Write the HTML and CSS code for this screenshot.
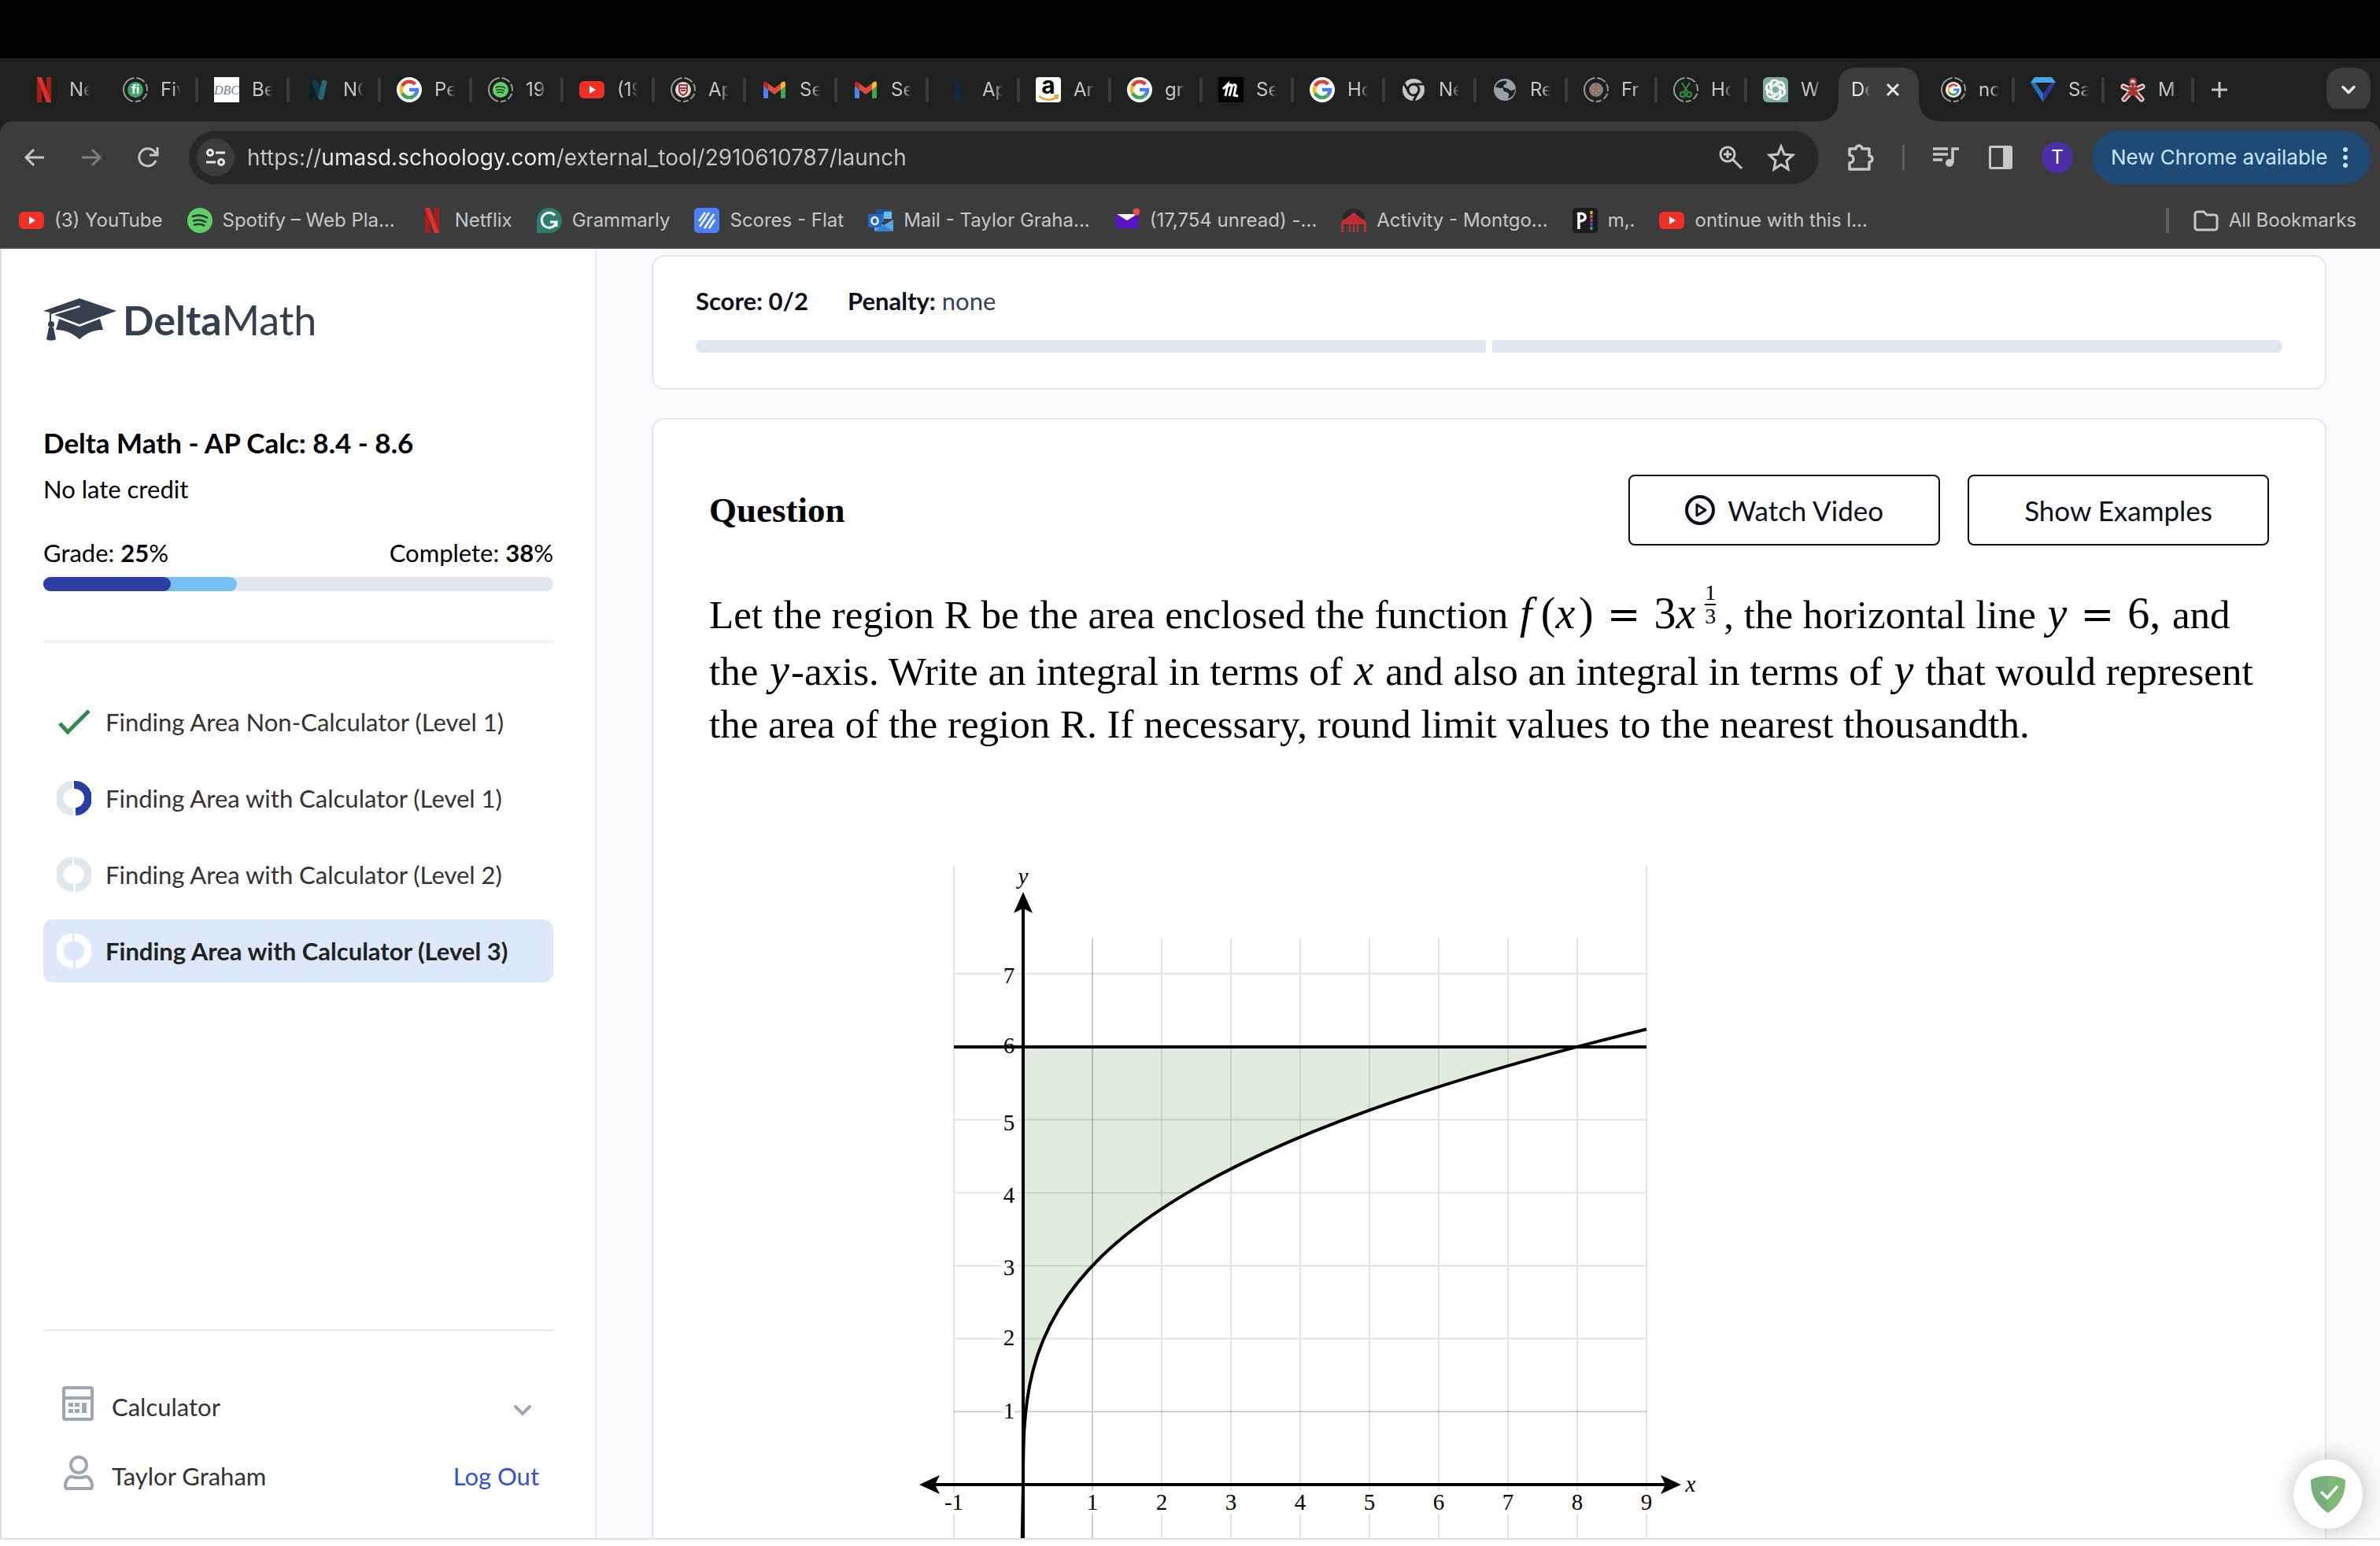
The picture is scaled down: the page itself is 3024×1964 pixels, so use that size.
FILE: index.html
```html
<!DOCTYPE html>
<html lang="en">
<head>
  <meta charset="UTF-8">
  <title>DeltaMath</title>
  <link rel="stylesheet" href="styles.css">
</head>
<body>

  <!-- shared icons -->
  <svg class="defs" aria-hidden="true">
    <symbol id="netflix" viewBox="0 0 32 32">
      <path fill="#a81c1c" d="M7 0h6v32H7zM19 0h6v32h-6z"/>
      <path fill="#e0302a" d="M7 0h6l12 32h-6z"/>
    </symbol>
    <symbol id="ring" viewBox="0 0 32 32">
      <circle cx="16" cy="16" r="15" fill="none" stroke="#9a9a9a" stroke-width="2"/>
      <path d="M16 16L16-2M16 16L32 5M16 16L34 20M16 16L26 32M16 16L14 34" stroke="#1f2020" stroke-width="3"/>
      <circle cx="16" cy="16" r="13" fill="#1f2020"/>
    </symbol>
    <symbol id="youtube" viewBox="0 0 32 32">
      <rect y="5" width="32" height="22" rx="6" fill="#ee3124"/>
      <path fill="#fff" d="M13 11l8 5-8 5z"/>
    </symbol>
    <symbol id="spotify" viewBox="0 0 32 32">
      <circle cx="16" cy="16" r="16" fill="#5fd068"/>
      <path d="M7 11c6-2 13-1.500 18 1.500M8 16.500c5-1.500 11-1 15 1.500M9 21.500c4-1 9-1 12 1" fill="none" stroke="#2b3a2c" stroke-width="2.600" stroke-linecap="round"/>
    </symbol>
    <symbol id="google" viewBox="0 0 32 32">
      <circle cx="16" cy="16" r="16" fill="#fff"/>
      <g fill="none" stroke-width="4.500">
        <path stroke="#dc4437" d="M23.500 9A10 10 0 0 0 7 11.500"/>
        <path stroke="#f4b92c" d="M7 11.500A10 10 0 0 0 7 20.500"/>
        <path stroke="#3ea457" d="M7 20.500A10 10 0 0 0 22.500 23.500"/>
        <path stroke="#4a7ff0" d="M22.500 23.500A10 10 0 0 0 26 16H16"/>
      </g>
    </symbol>
    <symbol id="gmail" viewBox="0 0 32 32">
      <path fill="#4a85ee" d="M2 8h6v19H4a2 2 0 0 1-2-2z"/>
      <path fill="#3fa653" d="M24 8h6v17a2 2 0 0 1-2 2h-4z"/>
      <path fill="#f4bc30" d="M24 8l2-2c2-1.500 4 0 4 2v3l-6 5z"/>
      <path fill="#b8281f" d="M8 8L6 6C4 4.500 2 6 2 8v3l6 5z"/>
      <path fill="#e04a3c" d="M8 8l8 6 8-6v8l-8 6-8-6z"/>
    </symbol>
    <symbol id="chev" viewBox="0 0 32 32">
      <path d="M8 12l8 8 8-8" fill="none" stroke="currentColor" stroke-width="4" stroke-linecap="round" stroke-linejoin="round"/>
    </symbol>
  </svg>

  <div class="notch"></div>

  <div class="tabstrip">
    <button class="tab first"><svg class="fav"><use href="#netflix"/></svg><span>Ne</span></button>
    <button class="tab"><svg class="fav" viewBox="0 0 32 32"><use href="#ring"/><circle cx="16" cy="16" r="10" fill="#40a566"/><text x="16" y="21" text-anchor="middle" class="ico-bold" fill="#fff">fi</text></svg><span>Fiv</span></button>
    <button class="tab"><svg class="fav" viewBox="0 0 32 32"><rect width="32" height="32" fill="#fff"/><text x="16" y="22" text-anchor="middle" class="ico-script" fill="#6d8296">DBC</text></svg><span>Be</span></button>
    <button class="tab"><svg class="fav" viewBox="0 0 32 32"><path d="M7 26l5-19" stroke="#0a2026" stroke-width="7" stroke-linecap="round"/><path d="M12 7l8 19" stroke="#123f47" stroke-width="7" stroke-linecap="round"/><path d="M20 25l4-18" stroke="#246872" stroke-width="7" stroke-linecap="round"/></svg><span>NO</span></button>
    <button class="tab"><svg class="fav"><use href="#google"/></svg><span>Pe</span></button>
    <button class="tab"><svg class="fav" viewBox="0 0 32 32"><use href="#ring"/><use href="#spotify" x="6" y="6" width="20" height="20"/></svg><span>19</span></button>
    <button class="tab"><svg class="fav"><use href="#youtube"/></svg><span>(19</span></button>
    <button class="tab"><svg class="fav" viewBox="0 0 32 32"><use href="#ring"/><circle cx="16" cy="16" r="10" fill="#ddd"/><path d="M11 10h10v7c0 3-3 5-5 6-2-1-5-3-5-6zM11 14h10M13 17h6" fill="none" stroke="#a33" stroke-width="2"/></svg><span>Ap</span></button>
    <button class="tab"><svg class="fav"><use href="#gmail"/></svg><span>Se</span></button>
    <button class="tab"><svg class="fav"><use href="#gmail"/></svg><span>Se</span></button>
    <button class="tab"><svg class="fav" viewBox="0 0 32 32"><path fill="#12293f" d="M15 4h3l1 6h2l-1 4v9l4 7H9l4-7v-9l-1-4h2z"/></svg><span>Ap</span></button>
    <button class="tab"><svg class="fav" viewBox="0 0 32 32"><rect width="32" height="32" rx="4" fill="#fff"/><text x="16" y="21" text-anchor="middle" class="ico-amazon">a</text><path d="M4 24c7 6 17 6 23 1M23 24l5-1-1 5" fill="none" stroke="#f29d38" stroke-width="2.500"/></svg><span>Am</span></button>
    <button class="tab"><svg class="fav"><use href="#google"/></svg><span>gr</span></button>
    <button class="tab"><svg class="fav" viewBox="0 0 32 32"><rect width="32" height="32" fill="#000"/><path d="M6 15l6-6-3 15M11 13c4-5 7-4 6 0l-3 11M16 13c4-5 7-4 6 0l-2 10 5 1" fill="none" stroke="#fff" stroke-width="3"/></svg><span>Se</span></button>
    <button class="tab"><svg class="fav"><use href="#google"/></svg><span>Ho</span></button>
    <button class="tab"><svg class="fav" viewBox="0 0 32 32"><circle cx="16" cy="16" r="14" fill="#c7c7c7"/><circle cx="16" cy="16" r="7" fill="none" stroke="#1f2020" stroke-width="3"/><path d="M16 9h13M10 19L4 8M22 19l-6 11" stroke="#1f2020" stroke-width="3"/></svg><span>Ne</span></button>
    <button class="tab"><svg class="fav" viewBox="0 0 32 32"><circle cx="16" cy="16" r="14" fill="#9aa0a6"/><path fill="#1f2020" d="M18 5c1 3-1 4-3 5s0 4 3 4 3 3 6 3 3-1 5-2c0 7-4 11-9 12 1-4 2-5 0-7s-6-1-6-4-2-2-4-2-3-2-6-1c1-5 6-9 14-8z"/><path fill="#9aa0a6" d="M20 6c4 1 7 5 8 9-3 1-5 0-6-2s-4-1-4-3 3-2 2-4z"/></svg><span>Re</span></button>
    <button class="tab narrow"><svg class="fav" viewBox="0 0 32 32"><use href="#ring"/><circle cx="16" cy="16" r="9" fill="#8d6f68"/><circle cx="16" cy="16" r="7" fill="none" stroke="#52a39b" stroke-width="2" stroke-dasharray="3 4"/><circle cx="16" cy="16" r="4" fill="none" stroke="#cf8b4a" stroke-width="2" stroke-dasharray="2 3"/></svg><span>Fr</span></button>
    <button class="tab narrow"><svg class="fav" viewBox="0 0 32 32"><use href="#ring"/><path d="M11 7l8 13M21 7l-8 13" stroke="#2f9242" stroke-width="2"/><circle cx="12" cy="22" r="3" fill="none" stroke="#2f9242" stroke-width="2"/><circle cx="20" cy="22" r="3" fill="none" stroke="#2f9242" stroke-width="2"/></svg><span>Ho</span></button>
    <button class="tab narrow last"><svg class="fav" viewBox="0 0 32 32"><path fill="#80aba0" d="M6 0h20a6 6 0 0 1 6 6v26H6a6 6 0 0 1-6-6V6a6 6 0 0 1 6-6z"/><g fill="none" stroke="#fff" stroke-width="1.800"><path id="petal" d="M11 18V9a5 5 0 0 1 9-3M13 10l7-4a5 5 0 0 1 6 7"/><use href="#petal" transform="rotate(60 16 16)"/><use href="#petal" transform="rotate(120 16 16)"/><use href="#petal" transform="rotate(180 16 16)"/><use href="#petal" transform="rotate(240 16 16)"/><use href="#petal" transform="rotate(300 16 16)"/></g></svg><span>W</span></button>
    <div class="tab current"><span>De</span><button class="close" aria-label="Close tab"><svg viewBox="0 0 18 18"><path d="M2 2l14 14M16 2L2 16" stroke="currentColor" stroke-width="3"/></svg></button></div>
    <button class="tab narrow"><svg class="fav" viewBox="0 0 32 32"><use href="#ring"/><use href="#google" x="6" y="6" width="20" height="20"/></svg><span>no</span></button>
    <button class="tab narrow"><svg class="fav" viewBox="0 0 32 32"><path fill="#4aa5e8" d="M5 0h22l5 7H0z"/><path fill="#2c6fc0" d="M0 7h6l10 14v11z"/><path fill="#2b3a9b" d="M32 7h-6L16 21v11z"/></svg><span>Sa</span></button>
    <button class="tab narrow"><svg class="fav" viewBox="0 0 32 32"><g fill="none" stroke-linecap="round" stroke-linejoin="round"><path stroke="#ddd" stroke-width="7" d="M16 5v8M4 12l9 4M28 12l-9 4M5 28l8-9M27 28l-8-9"/><circle cx="16" cy="6" r="5" fill="#ddd"/><path stroke="#a33232" stroke-width="3" d="M16 8v6M4 12l9 4M28 12l-9 4M5 28l8-9M27 28l-8-9M12 13l8 9M20 13l-8 9M11 19l5 3 5-3"/><circle cx="16" cy="6" r="4" stroke="#a33232" stroke-width="2.500"/></g></svg><span>M</span></button>
    <button class="round-btn plus" aria-label="New tab"><svg viewBox="0 0 22 22"><path d="M11 1v20M1 11h20" stroke="currentColor" stroke-width="3"/></svg></button>
    <button class="round-btn search-tabs" aria-label="Search tabs"><svg viewBox="0 0 32 32"><use href="#chev"/></svg></button>
  </div>

  <div class="toolbar">
    <div class="nav">
      <button aria-label="Back"><svg viewBox="0 0 32 32"><path d="M28 16H6M15 6L5 16l10 10" fill="none" stroke="currentColor" stroke-width="3"/></svg></button>
      <button class="off" aria-label="Forward"><svg viewBox="0 0 32 32"><path d="M4 16h22M17 6l10 10-10 10" fill="none" stroke="currentColor" stroke-width="3"/></svg></button>
      <button aria-label="Reload"><svg viewBox="0 0 32 32"><path d="M26 20A11 11 0 1 1 24 8.500l3 3M28 3v10H18" fill="none" stroke="currentColor" stroke-width="3"/></svg></button>
    </div>
    <div class="omnibox">
      <button class="site" aria-label="Site information"><svg viewBox="0 0 24 24"><g fill="none" stroke="currentColor" stroke-width="3"><circle cx="5" cy="6" r="3.500"/><path d="M12 6h12M0 18h12"/><circle cx="19" cy="18" r="3.500"/></g></svg></button>
      <input type="text" class="url" aria-label="Address" value="https://umasd.schoology.com/external_tool/2910610787/launch">
      <button aria-label="Zoom"><svg viewBox="0 0 36 36"><g fill="none" stroke="currentColor" stroke-width="3"><circle cx="14" cy="14" r="9"/><path d="M21 21l11 11M14 9v10M9 14h10"/></g></svg></button>
      <button aria-label="Bookmark"><svg viewBox="0 0 36 36"><path d="M18 4l4 10 11 1-8 7 2 11-9-6-9 6 2-11-8-7 11-1z" fill="none" stroke="currentColor" stroke-width="3"/></svg></button>
    </div>
    <div class="actions">
      <button aria-label="Extensions"><svg viewBox="0 0 36 36"><path d="M3 7h8a4 4 0 0 1 8 0h9v9a4 4 0 0 1 0 8v9H3v-8a5 5 0 0 0 0-10z" fill="none" stroke="currentColor" stroke-width="3.500" stroke-linejoin="round"/></svg></button>
      <span class="bar"></span>
      <button aria-label="Media"><svg viewBox="0 0 36 36"><path d="M2 7h19M2 14h19M2 21h12M27 25V7h8" fill="none" stroke="currentColor" stroke-width="3.500"/><circle cx="23" cy="25" r="5" fill="currentColor"/></svg></button>
      <button aria-label="Side panel"><svg viewBox="0 0 36 36"><path fill="currentColor" fill-rule="evenodd" d="M6 3h24a3 3 0 0 1 3 3v24a3 3 0 0 1-3 3H6a3 3 0 0 1-3-3V6a3 3 0 0 1 3-3zM6 6v24h15V6z"/></svg></button>
      <button class="avatar">T</button>
    </div>
    <button class="update">New Chrome available <svg viewBox="0 0 8 28"><circle cx="4" cy="4" r="3"/><circle cx="4" cy="14" r="3"/><circle cx="4" cy="24" r="3"/></svg></button>
  </div>

  <nav class="bookmarks">
    <a href="#"><svg class="fav"><use href="#youtube"/></svg>(3) YouTube</a>
    <a href="#"><svg class="fav"><use href="#spotify"/></svg>Spotify – Web Pla...</a>
    <a href="#"><svg class="fav"><use href="#netflix"/></svg>Netflix</a>
    <a href="#"><svg class="fav" viewBox="0 0 32 32"><path fill="#2f7d70" d="M0 32V16A16 16 0 1 1 16 32z"/><path d="M23 9.500A9.500 9.500 0 1 0 25 18h-8M25 18v6" fill="none" stroke="#fff" stroke-width="3"/></svg>Grammarly</a>
    <a href="#"><svg class="fav" viewBox="0 0 32 32"><rect width="32" height="32" rx="5" fill="#4b80f5"/><path d="M6 17l8-11M7 24L19 6M13 26L25 8M19 26l7-11" stroke="#fff" stroke-width="2.500"/></svg>Scores - Flat</a>
    <a href="#"><svg class="fav" viewBox="0 0 32 32"><path fill="#1f52a0" d="M10 2h20v9H10z"/><path fill="#66c1f2" d="M20 5h10v9H20z"/><path fill="#2b78cc" d="M10 8h10v10H10z"/><path fill="#55a9e8" d="M8 15l12 7 12-7v13a2 2 0 0 1-2 2H10a2 2 0 0 1-2-2z"/><path fill="#3482d2" d="M20 22l12 8H8z"/><rect y="8" width="17" height="17" rx="2" fill="#1f69c8"/><ellipse cx="8.500" cy="16.500" rx="4" ry="4.500" fill="none" stroke="#fff" stroke-width="2.500"/></svg>Mail - Taylor Graha...</a>
    <a href="#"><svg class="fav" viewBox="0 0 32 32"><path fill="#5a12c6" d="M2 8h28v16a2 2 0 0 1-2 2H4a2 2 0 0 1-2-2z"/><path fill="#fff" d="M3 8h26L16 16z"/><circle cx="28" cy="5" r="4.500" fill="#ee4b44"/></svg>(17,754 unread) -...</a>
    <a href="#"><svg class="fav" viewBox="0 0 32 32"><path d="M2 14a14 13 0 0 1 28 0" fill="#292929"/><path fill="#c02e35" d="M16 6l16 12H0zM0 18h32v13h-3V21H3v10H0zM10 21h2v10h-2zM15 21h2v10h-2zM20 21h2v10h-2z"/></svg>Activity - Montgo...</a>
    <a href="#"><svg class="fav" viewBox="0 0 32 32"><rect width="32" height="32" rx="4" fill="#1c1c1c"/><path d="M8 27V7M6 8c12-4 14 9 3 9" fill="none" stroke="#fff" stroke-width="3.500"/><g stroke-width="3"><path stroke="#f2c230" d="M24 4v4"/><path stroke="#e8632c" d="M24 9v4"/><path stroke="#c93b9c" d="M24 14v4"/><path stroke="#6251d8" d="M24 19v4"/><path stroke="#3cae55" d="M24 24v4"/></g></svg>m,.</a>
    <a href="#"><svg class="fav"><use href="#youtube"/></svg>ontinue with this l...</a>
    <span class="divider"></span>
    <a href="#" class="all"><svg class="fav" viewBox="0 0 32 32"><path d="M2 8a3 3 0 0 1 3-3h8l4 4h10a3 3 0 0 1 3 3v13a3 3 0 0 1-3 3H5a3 3 0 0 1-3-3z" fill="none" stroke="currentColor" stroke-width="3"/></svg>All Bookmarks</a>
  </nav>

  <div class="page">
    <aside class="sidebar">
      <div class="logo">
        <svg viewBox="0 0 93 54"><path d="M0 16L46 0l47 16-47 17-32-12 33-10-1-2-36 11v12h-2V18z"/><path d="M20 26l26 10 26-10 4 14c-14 0-22 5-30 12-8-7-16-12-30-12z"/><circle cx="10" cy="33" r="4"/><path d="M7 37h6l3 15c-3 2-9 2-12 0z"/></svg>
        <span><b>Delta</b>Math</span>
      </div>
      <h1>Delta Math - AP Calc: 8.4 - 8.6</h1>
      <p class="credit">No late credit</p>
      <div class="stats"><span>Grade: <b>25</b>%</span><span>Complete: <b>38</b>%</span></div>
      <div class="meter"><div class="complete" style="width: 38%"></div><div class="grade" style="width: 25%"></div></div>
      <hr class="thick">
      <nav class="skills">
        <a href="#"><svg viewBox="0 0 44 44"><path d="M4 24l10 11L41 8" fill="none" stroke="#38884a" stroke-width="5"/></svg>Finding Area Non-Calculator (Level 1)</a>
        <a href="#"><svg viewBox="0 0 44 44" fill="none" stroke-width="10"><path stroke="#e2e6ed" d="M21 39A17 17 0 0 1 20 5"/><path stroke="#263ea6" d="M22 5A17 17 0 0 1 24 39"/></svg>Finding Area with Calculator (Level 1)</a>
        <a href="#"><svg viewBox="0 0 44 44" fill="none" stroke-width="10" stroke="#e2e6ed"><path d="M21 39A17 17 0 0 1 20 5"/><path d="M22 5A17 17 0 0 1 24 39"/></svg>Finding Area with Calculator (Level 2)</a>
        <a href="#" class="active"><svg viewBox="0 0 44 44" fill="none" stroke-width="10" stroke="#fff"><path d="M21 39A17 17 0 0 1 20 5"/><path d="M22 5A17 17 0 0 1 24 39"/></svg>Finding Area with Calculator (Level 3)</a>
      </nav>
      <div class="side-foot">
        <hr>
        <button class="row">
          <svg viewBox="0 0 44 44"><g fill="none" stroke="#9ea5b3" stroke-width="4"><rect x="4" y="2" width="36" height="40" rx="2"/><path d="M4 15h36"/></g><path fill="#9ea5b3" d="M10 21h6v5h-6zM18 21h6v5h-6zM10 29h6v5h-6zM18 29h6v5h-6zM27 21h6v13h-6z"/></svg>
          <span class="label">Calculator</span>
          <svg class="chev" viewBox="0 0 44 44"><path d="M14 26l9 9 9-9" fill="none" stroke="currentColor" stroke-width="4" stroke-linecap="round"/></svg>
        </button>
        <div class="row">
          <svg viewBox="0 0 44 44"><g fill="none" stroke="#9ea5b3" stroke-width="4"><circle cx="23" cy="12" r="10"/><path d="M6 39c0-8 5-13 9-12 6 2 10 2 16 0 4-1 9 4 9 12 0 2-1 3-2 3H8c-1 0-2-1-2-3z"/></g></svg>
          <span class="label">Taylor Graham</span>
          <a href="#" class="logout">Log Out</a>
        </div>
      </div>
    </aside>

    <main class="main">
      <section class="card score">
        <p><b>Score: 0/2</b><span><b>Penalty:</b> none</span></p>
        <div class="segments"><div></div><div></div></div>
      </section>

      <section class="card question">
        <header>
          <h2>Question</h2>
          <button class="btn"><svg viewBox="0 0 38 38"><circle cx="19" cy="19" r="17" fill="none" stroke="currentColor" stroke-width="4"/><path d="M15 12l11 7-11 7z" fill="none" stroke="currentColor" stroke-width="3" stroke-linejoin="round"/></svg>Watch Video</button>
          <button class="btn">Show Examples</button>
        </header>
        <p class="prompt">Let the region R be the area enclosed the function <span class="math"><i>f</i>&#8201;(<i>x</i>&#8202;) <span class="eq">=</span> 3<i>x</i><span class="frac"><span>1</span><span>3</span></span></span>, the horizontal line <span class="math"><i>y</i> <span class="eq">=</span> 6,</span> and the <span class="math"><i>y</i></span>-axis. Write an integral in terms of <span class="math"><i>x</i></span> and also an integral in terms of <span class="math"><i>y</i></span> that would represent the area of the region R. If necessary, round limit values to the nearest thousandth.</p>

        <!-- one unit = 88 across, 92.7 up, origin at 140,786 -->
        <svg class="graph" viewBox="0 0 1000 900">
          <path fill="#e0ebdd" d="M140 786C140 600.600 140 415.200 844 229.800H140z"/>
          <path class="grid" d="M52 0V900M932 0V900M316 92V900M404 92V900M492 92V900M580 92V900M668 92V900M756 92V900M844 92V900M52 600.600H932M52 507.900H932M52 415.200H932M52 322.500H932M52 137.100H932"/>
          <path class="grid dark" d="M228 92V900M52 693.300H932"/>
          <g class="nums">
            <text x="122" y="149">7</text><text x="122" y="238">6</text><text x="122" y="336">5</text><text x="122" y="428">4</text><text x="122" y="520">3</text><text x="122" y="609">2</text><text x="122" y="702">1</text>
            <text x="52" y="818">-1</text><text x="228" y="818">1</text><text x="316" y="818">2</text><text x="404" y="818">3</text><text x="492" y="818">4</text><text x="580" y="818">5</text><text x="668" y="818">6</text><text x="756" y="818">7</text><text x="844" y="818">8</text><text x="932" y="818">9</text>
          </g>
          <path class="line" d="M52 230H932"/>
          <path class="line" d="M140 900V50M24 786H960"/>
          <path class="line" d="M138 900C139 850 140 800 140 786C140 593.200 140 400.300 932 207.500"/>
          <path d="M140 33l12 27-12-6-12 6zM8 786l26-12-6 12 6 12zM976 786l-26-12 6 12-6 12z"/>
          <text class="axis" x="140" y="23">y</text><text class="axis" x="988" y="795">x</text>
        </svg>
      </section>
    </main>
  </div>

  <button class="guard" aria-label="AdGuard"><svg viewBox="0 0 44 47"><path fill="#78b07c" d="M0 5C7 1 15 0 22 0v47C6 36 0 24 0 5z"/><path fill="#7cba76" d="M22 0c7 0 15 1 22 5 0 19-6 31-22 42z"/><path d="M13 20l8 8 13-15" fill="none" stroke="#fff" stroke-width="3.500"/></svg></button>

</body>
</html>
```
FILE: styles.css
```css
* {
  box-sizing: border-box;
}
body {
  margin: 0;
  height: 100vh;
  display: flex;
  flex-direction: column;
  overflow: hidden;
  background: #fff;
  font-family: Lato, sans-serif;
  font-size: 31px;
  line-height: 40px;
  color: #000;
}
button {
  font: inherit;
  color: inherit;
  background: none;
  border: none;
  padding: 0;
}
a {
  color: inherit;
  text-decoration: none;
}
svg {
  display: block;
  flex: none;
}
.defs {
  position: absolute;
  width: 0;
  height: 0;
}

/* browser frame */
.notch {
  flex: none;
  height: 74px;
  background: #000;
}
.tabstrip, .toolbar, .bookmarks {
  flex: none;
  display: flex;
  align-items: center;
  font-family: Inter, sans-serif;
  font-size: 24px;
  line-height: 32px;
  color: #c7c7c7;
  background: #3c3c3c;
}
.tabstrip {
  height: 80px;
  padding: 0 12px 0 20px;
  background: #1f2020;
}
.fav {
  width: 32px;
  height: 32px;
}
.tab {
  flex: none;
  display: flex;
  align-items: center;
  width: 116px;
  padding-left: 20px;
}
.tab.narrow {
  width: 114px;
}
.tab span {
  width: 26px;
  margin-left: 16px;
  overflow: hidden;
  white-space: nowrap;
  text-align: left;
  -webkit-mask-image: linear-gradient(to right, #000 60%, transparent);
  mask-image: linear-gradient(to right, #000 60%, transparent);
}
.tab::after {
  content: "";
  width: 4px;
  height: 32px;
  margin-left: auto;
  border-radius: 2px;
  background: #3c3c3c;
}
.tab.first::after, .tab.last::after {
  background: none;
}
.tab.current {
  position: relative;
  align-self: flex-end;
  width: 102px;
  height: 68px;
  margin: 0 8px 0 2px;
  padding: 0 0 12px 16px;
  border-radius: 20px 20px 0 0;
  background: #3c3c3c;
  color: #e8e8e8;
}
.tab.current span {
  width: 24px;
  margin: 0;
}
.tab.current::before, .tab.current::after {
  content: "";
  position: absolute;
  bottom: 0;
  width: 24px;
  height: 24px;
  border-radius: 0;
}
.tab.current::before {
  left: -24px;
  background: radial-gradient(circle at 0 0, transparent 23px, #3c3c3c 24px);
}
.tab.current::after {
  right: -24px;
  background: radial-gradient(circle at 100% 0, transparent 23px, #3c3c3c 24px);
}
.close {
  margin-left: 20px;
}
.close svg {
  width: 18px;
  height: 18px;
}
.round-btn {
  display: flex;
  align-items: center;
  justify-content: center;
  width: 56px;
  height: 56px;
  border-radius: 20px;
}
.plus {
  margin-left: 4px;
}
.plus svg {
  width: 22px;
  height: 22px;
}
.search-tabs {
  margin-left: auto;
  background: #3c3c3c;
  color: #e8e8e8;
}
.search-tabs svg {
  width: 28px;
  height: 28px;
}
.toolbar {
  height: 92px;
  padding: 0 12px 0 16px;
  border-radius: 16px 16px 0 0;
  box-shadow: 0 -16px 0 0 #1f2020;
}
.nav {
  display: flex;
  gap: 16px;
}
.nav button {
  width: 56px;
  display: flex;
  justify-content: center;
}
.nav svg {
  width: 32px;
  height: 32px;
}
.off {
  color: #7d7d7d;
}
.omnibox {
  flex: 1;
  display: flex;
  align-items: center;
  gap: 28px;
  height: 68px;
  margin: 0 36px 0 24px;
  padding: 0 30px 0 10px;
  border-radius: 34px;
  background: #282828;
}
.omnibox svg, .actions svg {
  width: 36px;
  height: 36px;
}
.omnibox .site {
  display: flex;
  align-items: center;
  justify-content: center;
  width: 48px;
  height: 48px;
  border-radius: 50%;
  background: #3c3c3c;
  color: #e8e8e8;
}
.omnibox .site svg {
  width: 24px;
  height: 24px;
}
.url {
  flex: 1;
  margin-left: -12px;
  padding: 0;
  border: none;
  font: inherit;
  font-size: 28px;
  line-height: 36px;
  color: transparent;
  background: linear-gradient(to right, #c7c7c7 94px, #eee 94px, #eee 390px, #c7c7c7 390px);
  -webkit-background-clip: text;
  background-clip: text;
}
.actions {
  display: flex;
  align-items: center;
  gap: 34px;
  margin-right: 24px;
}
.bar {
  width: 3px;
  height: 32px;
  background: #5e5e5e;
}
.avatar {
  width: 40px;
  height: 40px;
  border-radius: 50%;
  background: #4e2ea5;
  color: #fff;
}
.update {
  display: flex;
  align-items: center;
  justify-content: space-between;
  width: 354px;
  height: 68px;
  padding: 0 28px 0 24px;
  border-radius: 34px;
  background: #1f4a75;
  color: #c9e5fb;
  font-size: 26px;
  white-space: nowrap;
}
.update svg {
  width: 8px;
  height: 28px;
  fill: #c9e5fb;
}
.bookmarks {
  height: 70px;
  gap: 31px;
  padding: 0 30px 0 24px;
  border-bottom: 2px solid #4a4a4a;
  white-space: nowrap;
}
.bookmarks a {
  display: flex;
  align-items: center;
  gap: 13px;
}
.divider {
  width: 4px;
  height: 32px;
  margin-left: auto;
  background: #5e5e5e;
}

/* page */
.page {
  flex: 1;
  min-height: 0;
  display: flex;
  margin-bottom: 8px;
  overflow: hidden;
  border-left: 2px solid #dedede;
  border-bottom: 2px solid #dedede;
}
.sidebar {
  flex: none;
  display: flex;
  flex-direction: column;
  width: 756px;
  padding: 62px 53px 0;
  border-right: 2px solid #e2e8f0;
}
.logo {
  display: flex;
  align-items: center;
  gap: 8px;
  height: 56px;
  font-size: 52px;
  line-height: 56px;
  color: #343f4f;
}
.logo svg {
  width: 93px;
  height: 54px;
  fill: #343f4f;
}
h1 {
  margin: 106px 0 0;
  font-size: 35px;
  line-height: 44px;
}
p {
  margin: 0;
}
.credit {
  margin-top: 17px;
}
.stats {
  display: flex;
  justify-content: space-between;
  margin-top: 41px;
}
.meter {
  position: relative;
  height: 18px;
  margin-top: 11px;
  border-radius: 9px;
  background: #e2e6ee;
}
.meter div {
  position: absolute;
  height: 18px;
  border-radius: 9px;
}
.complete {
  background: #75bff2;
}
.grade {
  background: #2b3ca3;
}
hr {
  width: 100%;
  height: 2px;
  margin: 0;
  border: none;
  background: #e4e6ec;
}
.thick {
  height: 4px;
  margin: 62px 0 60px;
  background: #f2f3f6;
}
.skills {
  display: flex;
  flex-direction: column;
  gap: 17px;
  color: #333;
}
.skills a {
  display: flex;
  align-items: center;
  gap: 18px;
  height: 80px;
  padding-left: 17px;
  border-radius: 12px;
  white-space: nowrap;
}
.skills svg {
  width: 44px;
  height: 44px;
}
.skills .active {
  background: #dde8fb;
  color: #222;
  font-weight: bold;
}
.side-foot {
  margin-top: auto;
  padding-bottom: 39px;
  color: #333;
}
.side-foot hr {
  margin-bottom: 48px;
}
.row {
  display: flex;
  align-items: center;
  gap: 21px;
  width: 100%;
  height: 88px;
  padding: 0 18px 0 22px;
  text-align: left;
}
.row svg {
  width: 44px;
  height: 44px;
}
.row .chev {
  color: #9ea5b3;
}
.label, .logout {
  padding-top: 8px;
}
.label {
  flex: 1;
}
.logout {
  color: #3450dd;
}
.main {
  flex: 1;
  display: flex;
  flex-direction: column;
  gap: 36px;
  padding: 8px 68px 0 70px;
  background: #f8fafc;
}
.card {
  flex: none;
  border: 2px solid #e4e8ee;
  border-radius: 16px;
  background: #fff;
}
.score {
  padding: 36px 54px 45px;
  color: #111827;
}
.score p {
  display: flex;
  gap: 50px;
}
.score span {
  color: #344054;
}
.score b {
  color: #0b1020;
}
.segments {
  display: flex;
  gap: 8px;
  height: 16px;
  margin-top: 30px;
  border-radius: 8px;
  overflow: hidden;
}
.segments div {
  flex: 1;
  background: #e2e6ed;
}
.question {
  padding: 70px 71px 0;
}
.question header {
  display: flex;
  align-items: center;
  gap: 35px;
}
h2 {
  flex: 1;
  margin: 0;
  font-family: "Liberation Serif", serif;
  font-size: 45px;
  line-height: 48px;
}
.btn {
  display: flex;
  align-items: center;
  gap: 16px;
  height: 90px;
  padding: 0 70px;
  border: 2px solid #0b1020;
  border-radius: 8px;
  color: #0b1020;
  font-size: 35px;
}
.btn svg {
  width: 38px;
  height: 38px;
}
.prompt {
  margin-top: 46px;
  font-family: "Liberation Serif", serif;
  font-size: 51px;
  line-height: 66px;
}
.math {
  padding: 0 2px;
  font-size: 56px;
  line-height: 71px;
  white-space: nowrap;
}
.eq {
  padding: 0 3px;
  font-family: "DejaVu Serif", serif;
  font-size: 51px;
}
.frac {
  display: inline-flex;
  flex-direction: column;
  margin: 0 8px 0 12px;
  vertical-align: 36px;
  font-size: 28px;
  line-height: 28px;
  text-align: center;
}
.frac span + span {
  border-top: 2px solid #000;
}
.graph {
  width: 1000px;
  height: 900px;
  margin: 147px 0 0 259px;
}
.grid {
  fill: none;
  stroke: rgba(0, 0, 0, 0.11);
  stroke-width: 2;
}
.grid.dark {
  stroke: rgba(0, 0, 0, 0.2);
}
.line {
  fill: none;
  stroke: #000;
  stroke-width: 4;
}
.nums text, .axis {
  font-family: "Liberation Serif", serif;
  font-size: 29px;
  text-anchor: middle;
}
.nums text {
  stroke: #fff;
  stroke-width: 10;
  paint-order: stroke;
}
.axis {
  font-style: italic;
}
.ico-bold {
  font: bold 15px Inter, sans-serif;
}
.ico-script {
  font: italic 16px "Liberation Serif", serif;
}
.ico-amazon {
  font: bold 30px Inter, sans-serif;
}

/* floating extension badge */
.guard {
  position: fixed;
  right: 22px;
  bottom: 22px;
  display: flex;
  align-items: center;
  justify-content: center;
  width: 88px;
  height: 88px;
  border-radius: 50%;
  background: #fff;
  box-shadow: 0 0 28px rgba(0, 0, 0, 0.25);
}
.guard svg {
  width: 44px;
  height: 47px;
}
```
